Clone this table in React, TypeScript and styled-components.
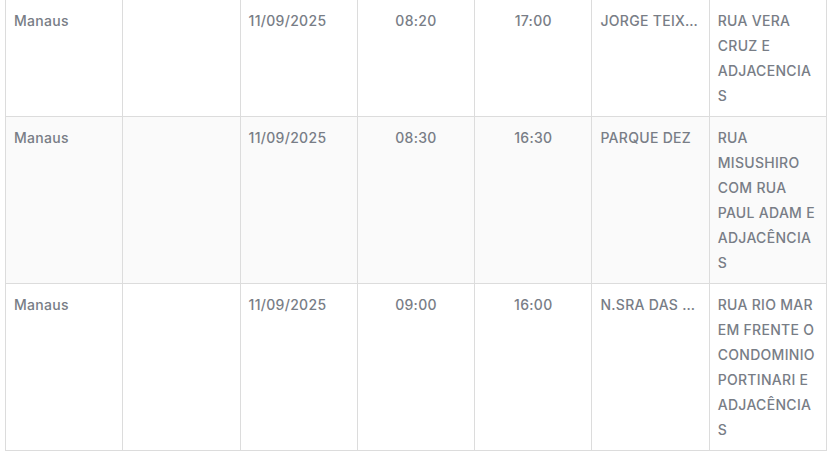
import React from "react";
import styled, { createGlobalStyle } from "styled-components";

const Global = createGlobalStyle`
  html, body { margin: 0; padding: 0; background: #ffffff; }
  body { font-family: Inter, "Open Sans", sans-serif; }
`;

const Wrap = styled.div`
  padding: 0 5px;
  overflow: hidden;
  height: 456px;
`;

const Table = styled.table`
  width: 822px;
  margin-top: -1px;
  border-collapse: collapse;
  table-layout: fixed;
  font-family: Inter, "Open Sans", sans-serif;
  font-size: 14px;
  font-weight: 500;
  letter-spacing: 0.3px;
  line-height: 25px;
  color: #787d86;
`;

const Row = styled.tr<{ $striped?: boolean }>`
  background: ${(p) => (p.$striped ? "#fafafa" : "#ffffff")};
`;

const Cell = styled.td<{ $align?: "left" | "center"; $ellipsis?: boolean; $wrap?: boolean }>`
  border: 1px solid #dcdcdc;
  padding: 8px 8px;
  vertical-align: top;
  text-align: ${(p) => p.$align ?? "left"};
  white-space: ${(p) => (p.$ellipsis ? "nowrap" : "normal")};
  overflow: hidden;
  text-overflow: ${(p) => (p.$ellipsis ? "ellipsis" : "clip")};
  overflow-wrap: ${(p) => (p.$wrap ? "anywhere" : "normal")};
`;

const Upper = styled.span`
  text-transform: uppercase;
`;

type Item = {
  city: string;
  date: string;
  start: string;
  end: string;
  hood: string;
  address: string;
};

const rows: Item[] = [
  { city: "Manaus", date: "11/09/2025", start: "08:20", end: "17:00", hood: "JORGE TEIXEIRA", address: "RUA VERA CRUZ E ADJACENCIAS" },
  { city: "Manaus", date: "11/09/2025", start: "08:30", end: "16:30", hood: "PARQUE DEZ", address: "RUA MISUSHIRO COM RUA PAUL ADAM E ADJACÊNCIAS" },
  { city: "Manaus", date: "11/09/2025", start: "09:00", end: "16:00", hood: "N.SRA DAS GRAÇAS", address: "RUA RIO MAR EM FRENTE O CONDOMINIO PORTINARI E ADJACÊNCIAS" },
];

export default function App() {
  return (
    <>
      <Global />
      <Wrap>
        <Table>
          <tbody>
            {rows.map((r, i) => (
              <Row key={i} $striped={i % 2 === 1}>
                <Cell>{r.city}</Cell>
                <Cell></Cell>
                <Cell>{r.date}</Cell>
                <Cell $align="center">{r.start}</Cell>
                <Cell $align="center">{r.end}</Cell>
                <Cell $ellipsis><Upper>{r.hood}</Upper></Cell>
                <Cell $wrap><Upper>{r.address}</Upper></Cell>
              </Row>
            ))}
          </tbody>
        </Table>
      </Wrap>
    </>
  );
}
